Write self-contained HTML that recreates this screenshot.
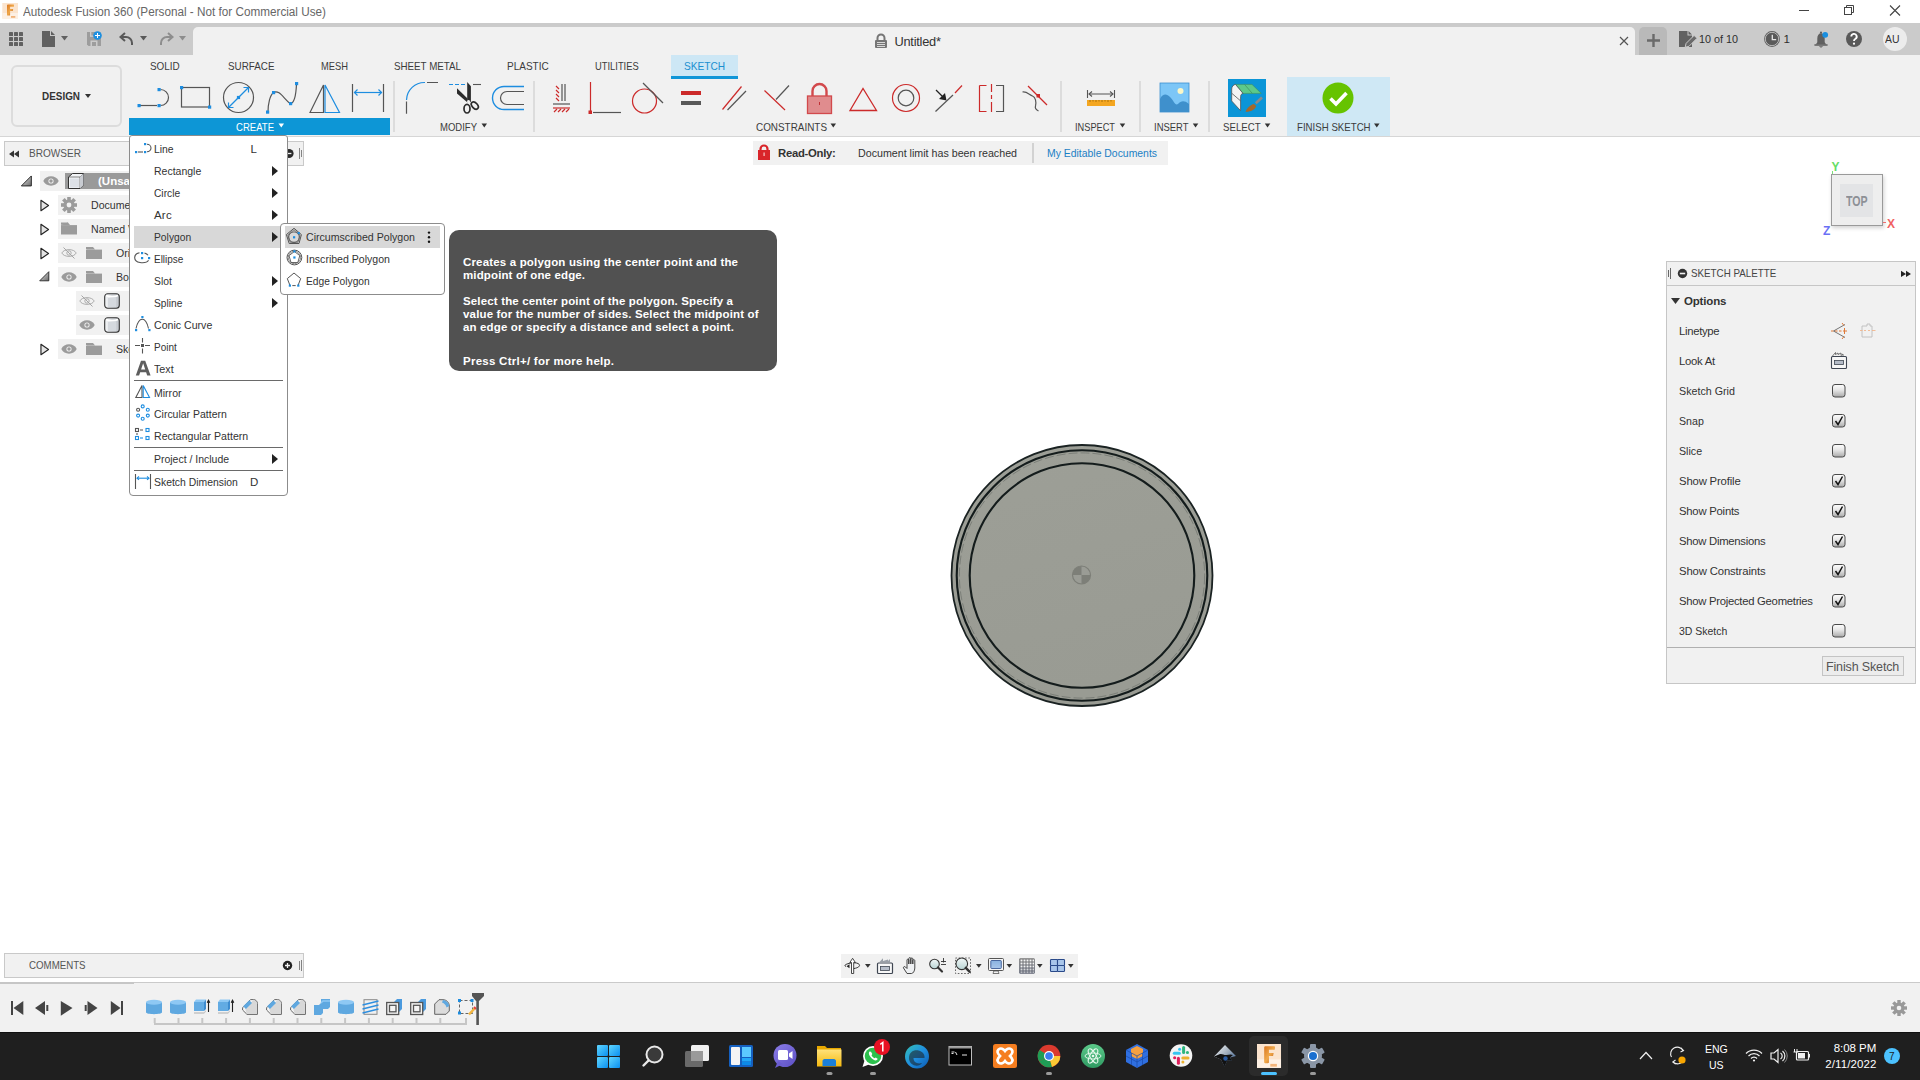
<!DOCTYPE html>
<html><head><meta charset="utf-8">
<style>
*{margin:0;padding:0;box-sizing:border-box}
html,body{width:1920px;height:1080px;overflow:hidden;background:#fff;font-family:"Liberation Sans",sans-serif;color:#333}
.a{position:absolute}
.t{position:absolute;white-space:nowrap;line-height:1}
svg{position:absolute;left:0;top:0;overflow:visible}
</style></head><body>
<!-- TITLE BAR -->
<div class="a" style="left:0;top:0;width:1920px;height:23px;background:#fff"></div>
<!-- TAB BAR -->
<div class="a" style="left:0;top:23px;width:1920px;height:32px;background:#cbcbcb"></div>
<div class="a" style="left:193px;top:27px;width:1442px;height:28px;background:#f1f1f1;border-radius:5px 5px 0 0"></div>
<div class="a" style="left:1639px;top:27px;width:28px;height:28px;background:#b9b9b9;border-radius:5px 5px 0 0"></div>
<div class="a" style="left:1883px;top:27px;width:24px;height:24px;border-radius:50%;background:#ececec"></div>
<!-- TOOLBAR -->
<div class="a" style="left:0;top:55px;width:1920px;height:81px;background:#f1f1f1"></div>
<div class="a" style="left:0;top:136px;width:1920px;height:1px;background:#d6d6d6"></div>
<div class="a" style="left:11px;top:65px;width:111px;height:62px;border:2px solid #dcdcdc;border-radius:6px"></div>
<div class="a" style="left:671px;top:55px;width:67px;height:24px;background:#cde7f5"></div>
<div class="a" style="left:671px;top:76px;width:67px;height:3px;background:#0f96d8"></div>
<div class="a" style="left:129px;top:118px;width:261px;height:17px;background:#0d96d6"></div>
<div class="a" style="left:1287px;top:77px;width:103px;height:59px;background:#cfe8f5"></div>
<div class="a" style="left:393px;top:81px;width:2px;height:51px;background:#dcdcdc"></div>
<div class="a" style="left:533px;top:81px;width:2px;height:51px;background:#dcdcdc"></div>
<div class="a" style="left:1060px;top:81px;width:2px;height:51px;background:#dcdcdc"></div>
<div class="a" style="left:1139px;top:81px;width:2px;height:51px;background:#dcdcdc"></div>
<div class="a" style="left:1208px;top:81px;width:2px;height:51px;background:#dcdcdc"></div>

<!-- BROWSER -->
<div class="a" style="left:4px;top:141px;width:300px;height:25px;background:#f1f1f1;border:1px solid #c9c9c9"></div>
<div class="a" style="left:40px;top:171px;width:100px;height:20px;background:#f1f1f1"></div>
<div class="a" style="left:65px;top:173px;width:80px;height:16px;background:#9a9a9a"></div>
<div class="a" style="left:58px;top:195px;width:80px;height:20px;background:#f1f1f1"></div>
<div class="a" style="left:58px;top:219px;width:80px;height:20px;background:#f1f1f1"></div>
<div class="a" style="left:58px;top:243px;width:80px;height:20px;background:#f1f1f1"></div>
<div class="a" style="left:58px;top:267px;width:80px;height:20px;background:#f1f1f1"></div>
<div class="a" style="left:76px;top:291px;width:60px;height:20px;background:#f1f1f1"></div>
<div class="a" style="left:76px;top:315px;width:60px;height:20px;background:#f1f1f1"></div>
<div class="a" style="left:58px;top:339px;width:80px;height:20px;background:#f1f1f1"></div>

<!-- READ-ONLY BANNER -->
<div class="a" style="left:753px;top:141px;width:415px;height:24px;background:#f1f1f1"></div>
<div class="a" style="left:1032px;top:143px;width:2px;height:20px;background:#d2d2d2"></div>

<!-- VIEWCUBE -->
<div class="a" style="left:1831px;top:174px;width:52px;height:52px;background:#eeeeee;border:1px solid #9a9a9a;box-shadow:1px 2px 4px rgba(0,0,0,0.18)"></div>
<div class="a" style="left:1840px;top:184px;width:33px;height:33px;background:#e3e4e6"></div>

<!-- SKETCH PALETTE -->
<div class="a" style="left:1666px;top:261px;width:250px;height:423px;background:#f1f1f1;border:1px solid #c6c6c6"></div>
<div class="a" style="left:1667px;top:285px;width:248px;height:1px;background:#c6c6c6"></div>
<div class="a" style="left:1667px;top:647px;width:248px;height:1px;background:#b0b0b0"></div>
<div class="a" style="left:1822px;top:656px;width:82px;height:20px;background:#ececec;border:1px solid #c4c4c4"></div>

<!-- COMMENTS -->
<div class="a" style="left:4px;top:953px;width:300px;height:25px;background:#f1f1f1;border:1px solid #c9c9c9"></div>

<!-- NAV BAR -->
<div class="a" style="left:841px;top:954px;width:237px;height:24px;background:#f1f1f1"></div>

<!-- TIMELINE -->
<div class="a" style="left:0;top:982px;width:1920px;height:50px;background:#f1f1f1"></div>
<div class="a" style="left:0;top:982px;width:1920px;height:1px;background:#cacaca"></div>
<div class="a" style="left:0;top:982px;width:134px;height:2px;background:#c6c6c6"></div>

<!-- TASKBAR -->
<div class="a" style="left:0;top:1032px;width:1920px;height:48px;background:#1f1f1f"></div>
<div class="a" style="left:0;top:1032px;width:1920px;height:1px;background:#101010"></div>
<div class="a" style="left:1249px;top:1036px;width:39px;height:40px;background:#2b2b2b;border-radius:5px"></div>
<div class="a" style="left:1261px;top:1072px;width:16px;height:3px;background:#4cc2ff;border-radius:2px"></div>
<div class="a" style="left:1884px;top:1048px;width:16px;height:16px;background:#4cc2ff;border-radius:50%"></div>
<svg width="1920" height="140" viewBox="0 0 1920 140" style="z-index:3">
<!-- F logo -->
<defs><linearGradient id="gF" x1="0" y1="0" x2="1" y2="1"><stop offset="0" stop-color="#d9761f"/><stop offset="0.5" stop-color="#f0a84a"/><stop offset="1" stop-color="#b9560f"/></linearGradient></defs>
<rect x="2.3" y="3" width="15.7" height="15.6" fill="#fbe4ce"/>
<rect x="2.3" y="13" width="15.7" height="5.6" fill="#fdf0e4"/>
<path d="M7 5.2 C7 4.7 7.4 4.4 7.9 4.4 H13.4 C14 4.4 14.2 5 14 5.6 L13.8 6.8 H10.1 V8.9 H13.2 L12.8 10.9 H10.1 V15 C10.1 15.4 9.8 15.6 9.4 15.6 H7.6 C7.2 15.6 7 15.3 7 15Z" fill="url(#gF)"/>
<rect x="11" y="16" width="4.3" height="1.8" fill="#f2b47a"/>
<!-- window controls -->
<rect x="1799" y="10" width="10" height="1" fill="#444"/>
<rect x="1844.5" y="7.5" width="7" height="7" fill="none" stroke="#444" stroke-width="1"/>
<path d="M1846.5 7.5 v-2 h7 v7 h-2" fill="none" stroke="#444" stroke-width="1"/>
<path d="M1890 5.5 l10 10 M1900 5.5 l-10 10" stroke="#444" stroke-width="1.1"/>
<!-- grid -->
<g fill="#616161">
<rect x="9" y="32" width="4" height="4" rx="0.6"/><rect x="14" y="32" width="4" height="4" rx="0.6"/><rect x="19" y="32" width="4" height="4" rx="0.6"/>
<rect x="9" y="37" width="4" height="4" rx="0.6"/><rect x="14" y="37" width="4" height="4" rx="0.6"/><rect x="19" y="37" width="4" height="4" rx="0.6"/>
<rect x="9" y="42" width="4" height="4" rx="0.6"/><rect x="14" y="42" width="4" height="4" rx="0.6"/><rect x="19" y="42" width="4" height="4" rx="0.6"/>
</g>
<!-- file -->
<path d="M42 31 H50 V36 H55 V47 H42Z" fill="#616161"/>
<path d="M51 31 L55 35 H51Z" fill="#616161"/>
<path d="M61 36 h7 l-3.5 4.5z" fill="#616161"/>
<!-- save -->
<path d="M87 32 H100 L101 33 V46 H88.5 L87 44.5Z" fill="#9d9d9d"/>
<rect x="90" y="32" width="5.5" height="4.8" fill="#cbcbcb"/>
<rect x="91.3" y="32" width="4.2" height="3.5" fill="#9d9d9d"/>
<rect x="90.5" y="40.5" width="7" height="5.5" fill="#cbcbcb"/>
<rect x="92" y="42" width="4" height="4" fill="#9d9d9d"/>
<circle cx="97.5" cy="35.5" r="4.3" fill="#1d8fe0"/>
<path d="M97.5 33v5 M95 35.5h5" stroke="#fff" stroke-width="1"/>
<!-- undo -->
<path d="M132 45 v-2 a6 6 0 0 0 -6 -6 h-4" fill="none" stroke="#595959" stroke-width="2"/>
<path d="M125 33 l-4.5 4 l4.5 4" fill="none" stroke="#595959" stroke-width="2"/>
<path d="M140 36 h7 l-3.5 4.5z" fill="#595959"/>
<!-- redo -->
<path d="M161 45 v-2 a6 6 0 0 1 6 -6 h4" fill="none" stroke="#8d8d8d" stroke-width="2"/>
<path d="M168 33 l4.5 4 l-4.5 4" fill="none" stroke="#8d8d8d" stroke-width="2"/>
<path d="M179 36 h7 l-3.5 4.5z" fill="#8d8d8d"/>
<!-- doc lock -->
<path d="M877.5 41 v-3 a3.5 3.5 0 0 1 7 0 v3" fill="none" stroke="#767676" stroke-width="2"/>
<rect x="875" y="40" width="12" height="8" rx="1" fill="#767676"/>
<path d="M877 42.5h8M877 44.5h8M877 46.5h8" stroke="#f1f1f1" stroke-width="0.8"/>
<!-- tab close -->
<path d="M1620 37 l8 8 M1628 37 l-8 8" stroke="#555" stroke-width="1.2"/>
<!-- plus -->
<path d="M1647 40.5 h13 M1653.5 34 v13" stroke="#6a6a6a" stroke-width="2.4"/>
<!-- doc edit -->
<path d="M1679 31 H1687.5 V35.5 H1692 V47 H1679Z" fill="#616161"/>
<path d="M1688.5 31 L1692 34.5 H1688.5Z" fill="#616161"/>
<path d="M1685.2 47.2 l0.9 -3.8 l8 -8 l2.9 2.9 l-8 8z" fill="#6a6a6a" stroke="#cbcbcb" stroke-width="1"/>
<!-- clock -->
<circle cx="1772" cy="39" r="7.9" fill="#5a5a5a"/>
<circle cx="1772" cy="39" r="6.7" fill="none" stroke="#d0d0d0" stroke-width="0.8"/>
<path d="M1772.3 34.8 V39.6 H1776.2" fill="none" stroke="#e6e6e6" stroke-width="1.3"/>
<!-- bell -->
<path d="M1815.8 44.6 L1817.3 42.3 V38.6 C1817.3 35.2 1819 33.2 1821 33.2 C1823 33.2 1824.7 35.2 1824.7 38.6 V42.3 L1826.2 44.6Z" fill="#606060"/>
<rect x="1814.2" y="44.2" width="13.6" height="1.6" rx="0.8" fill="#606060"/>
<circle cx="1821" cy="32.6" r="1.1" fill="#606060"/>
<path d="M1818.8 46.2 H1823.2 L1821 47.8Z" fill="#606060"/>
<circle cx="1825.2" cy="34.8" r="2.9" fill="#1a8fe0"/>
<!-- help -->
<circle cx="1854" cy="39" r="8" fill="#595959"/>
<path d="M1851.3 36.6 a2.7 2.7 0 1 1 3.9 2.4 c-0.9 0.5 -1.2 1 -1.2 2" fill="none" stroke="#fff" stroke-width="1.9"/>
<circle cx="1854" cy="43.7" r="1.1" fill="#fff"/>
</svg>
<svg width="1920" height="140" viewBox="0 0 1920 140" style="z-index:3">
<g fill="none" stroke="#555" stroke-width="1.2">
<!-- line tool -->
<path d="M140 105.5 h17"/>
<path d="M160.5 89.5 a8 8 0 0 1 0 16"/>
<!-- rectangle -->
<rect x="181.5" y="87.5" width="28" height="19.5"/>
<!-- circle -->
<circle cx="238.5" cy="97.5" r="15"/>
<!-- spline -->
<path d="M268 112 C268 104 270 95 273.5 92.5 C279 89 284 99 290 103.5 C294 104 296 96 296.5 84"/>
<!-- mirror left triangle -->
<path d="M310 112.5 L323.5 85 V112.5 Z"/>
<!-- dim -->
<path d="M352.5 84 V112 M383.5 84 V112"/>
<!-- fillet -->
<path d="M406.5 101.5 V113.7 M427 82.5 H438"/>
<!-- offset inner -->
<path d="M524 91.5 H507 A6.5 6.5 0 0 0 507 104.5 H524"/>
</g>
<g fill="#1d8de0">
<rect x="137.5" y="104" width="3.2" height="3.2"/><rect x="157.5" y="104" width="3.2" height="3.2"/><rect x="157.5" y="88" width="3.2" height="3.2"/>
<rect x="180" y="86" width="3.2" height="3.2"/><rect x="208" y="105.5" width="3.2" height="3.2"/>
<rect x="236.9" y="95.9" width="3.2" height="3.2"/>
<rect x="266" y="110.5" width="3.2" height="3.2"/><rect x="272" y="91" width="3.2" height="3.2"/><rect x="289" y="102" width="3.2" height="3.2"/><rect x="295" y="82" width="3.2" height="3.2"/>
</g>
<g fill="none" stroke="#1d8de0" stroke-width="1.2">
<path d="M229 107 L248 88"/>
<path d="M228.5 102.5 V107.5 H233.5 M243.5 87.5 H248.5 V92.5"/>
<path d="M325 85 V112.5 H339.5 Z"/>
<path d="M354 92.5 H382"/>
<path d="M357.5 89.5 L354.5 92.5 L357.5 95.5 M378.5 89.5 L381.5 92.5 L378.5 95.5"/>
<path d="M406.5 100 A18 18 0 0 1 425 82.5"/>
<path d="M492.5 98 A11.5 11.5 0 0 1 504 86.5 H524 M492.5 98 A11.5 11.5 0 0 0 504 109.5 H524" stroke-width="1.4"/>
<path d="M449 84.5 h4 M455 84.5 h4 M461 84.5 h4"/>
</g>
<!-- scissors -->
<path d="M473 84.5 H481" stroke="#555" stroke-width="1.1"/>
<path d="M467.2 82 L470.9 86.2 L470.9 102 L467.2 100.5 Z" fill="#2b2b2b"/>
<path d="M457 88.2 L467.5 98.5 L467.5 102.5 L457 93.6 Z" fill="#2b2b2b"/>
<circle cx="468.6" cy="101.2" r="1.3" fill="#f1f1f1"/>
<ellipse cx="467" cy="108.7" rx="3" ry="4.3" fill="none" stroke="#2b2b2b" stroke-width="1.7"/>
<ellipse cx="474.8" cy="105.6" rx="4.2" ry="2.7" fill="none" stroke="#2b2b2b" stroke-width="1.7" transform="rotate(48 474.8 105.6)"/>
<!-- constraints -->
<g fill="none" stroke="#cc2a2a" stroke-width="1.2">
<path d="M553 108 H570"/>
<path d="M554 112 l3-3 M558 112 l3-3 M562 112 l3-3 M566 112 l3-3"/>
<path d="M556 86 l3 3 M556 90 l3 3 M556 94 l3 3 M556 98 l3 3"/>
<path d="M590.5 82 V111"/>
<circle cx="644.5" cy="101" r="12"/>
<path d="M722.5 109.5 L741.5 86.5"/>
<path d="M764.5 90.5 L785 110"/>
<path d="M850 110.5 L863 88.5 L876.5 110.5 Z" stroke-width="1.3"/>
<circle cx="906" cy="98" r="13.5"/>
<path d="M955 93 L962 85.5"/>
<path d="M979.5 85.5 h7 M979.5 85.5 V111.5 h7"/>
<path d="M991.5 84 v8 M991.5 95 v4 M991.5 102 v10"/>
<path d="M1028 86 L1047 105"/>
</g>
<g fill="none" stroke="#555" stroke-width="1.2">
<path d="M562 84 V101 M565 84 V101"/>
<path d="M553 104 H570"/>
<path d="M593 112.5 H621"/>
<path d="M643 83 L663 103"/>
<path d="M727.5 110 L746 91"/>
<path d="M776 99.5 L789 85.5"/>
<circle cx="906" cy="98" r="7.8"/>
<path d="M935.5 111.5 L953 95"/>
<path d="M996 85.5 h7.5 V111.5 h-7.5"/>
<path d="M1022.5 92 c4 -1 7 3 10 4 c3 1 4 6 3 10 c-1 3 1 4 3 5"/>
</g>
<rect x="588.5" y="110.5" width="3.5" height="3.5" fill="#cc2a2a"/>
<rect x="681" y="91" width="20" height="4" fill="#cc2a2a"/>
<rect x="681" y="101" width="20" height="4" fill="#595959"/>
<path d="M936 90 L944 98" stroke="#222" stroke-width="1.3"/>
<path d="M946.5 100.5 L939 99 L945 93 Z" fill="#222"/>
<rect x="1036.5" y="94" width="3.5" height="3.5" fill="#cc2a2a"/>
<!-- lock -->
<path d="M812.5 96 V91 a7 7 0 0 1 14 0 V96" fill="none" stroke="#d2494c" stroke-width="2.4"/>
<rect x="807.5" y="96" width="24" height="17.5" fill="#e08c8e" stroke="#d2494c" stroke-width="1.3"/>
<path d="M819.5 102 v3" stroke="#c03035" stroke-width="1"/>
<!-- measure -->
<path d="M1087.5 90 V98 M1114.5 90 V98 M1089 94 H1113" stroke="#555" stroke-width="1.1" fill="none"/>
<path d="M1092 91.5 L1089 94 L1092 96.5 M1110 91.5 L1113 94 L1110 96.5" stroke="#555" stroke-width="1.1" fill="none"/>
<rect x="1087" y="100" width="28" height="6" fill="#f4a620"/>
<path d="M1090 100v2 M1093 100v1.5 M1096 100v2 M1099 100v1.5 M1102 100v2 M1105 100v1.5 M1108 100v2 M1111 100v1.5" stroke="#8a5a00" stroke-width="0.7"/>
<!-- insert image -->
<rect x="1160" y="83" width="29" height="29" fill="#7cc6f7"/>
<rect x="1160" y="83" width="29" height="29" fill="none" stroke="#3c8fd0" stroke-width="0.8"/>
<path d="M1160 112 V99 C1163 93 1167 94 1170 97 C1174 101 1175 106 1178 104 C1181 101 1184 100 1189 104 V112Z" fill="#3f90cc"/>
<circle cx="1180.5" cy="91" r="3" fill="#fbf7c8"/>
<!-- select -->
<rect x="1228" y="79" width="38" height="38" fill="#0b95d7"/>
<path d="M1235.5 84.4 H1252 L1261.3 93.4 H1243 Z" fill="#5cc98a" stroke="#3e8e60" stroke-width="0.6"/>
<path d="M1244.5 84.4 L1252.3 93.4" stroke="#3e8e60" stroke-width="0.7"/>
<path d="M1235.5 84.4 C1233.5 84.6 1231.8 86.5 1231.7 89 V101 L1240.6 110.7 V96.5 C1240.6 95 1241.5 93.6 1243 93.4 Z" fill="#f4f4f4" stroke="#555" stroke-width="0.8" stroke-linejoin="round"/>
<path d="M1231.8 93.3 L1240.5 100.8" stroke="#555" stroke-width="0.8"/>
<path d="M1255.8 103.2 L1262 97.5" stroke="#8a8a8a" stroke-width="2.6"/>
<path d="M1245.5 111.7 C1247 108 1250.5 104.5 1254 104 L1256.2 106 C1255 110 1250 112 1245.5 111.7Z" fill="#a5682a"/>
<!-- finish check -->
<circle cx="1338" cy="98" r="15.5" fill="#66c300"/>
<path d="M1330.5 98.5 L1336 104 L1346.5 93" fill="none" stroke="#fff" stroke-width="3.6"/>
<!-- dropdown triangles -->
<g fill="#333">
<path d="M85 94 h6 l-3 4z"/>
<path d="M481.5 123.5 h5.5 l-2.75 4z"/>
<path d="M830.5 123.5 h5.5 l-2.75 4z"/>
<path d="M1119.7 123.5 h5.5 l-2.75 4z"/>
<path d="M1192.8 123.5 h5.5 l-2.75 4z"/>
<path d="M1264.8 123.5 h5.5 l-2.75 4z"/>
<path d="M1374 123.5 h5.5 l-2.75 4z"/>
</g>
<path d="M278.5 123.5 h5.5 l-2.75 4z" fill="#fff"/>
</svg>
<svg width="1920" height="1080" viewBox="0 0 1920 1080" style="z-index:3">
<defs>
<linearGradient id="gtri" x1="0" y1="0" x2="1" y2="1"><stop offset="0" stop-color="#f0f0f0"/><stop offset="1" stop-color="#666"/></linearGradient>
<linearGradient id="gcb" x1="0" y1="0" x2="0" y2="1"><stop offset="0" stop-color="#fdfdfd"/><stop offset="0.45" stop-color="#e6e6e6"/><stop offset="1" stop-color="#a9a9a9"/></linearGradient>
<linearGradient id="gcyl" x1="0" y1="0" x2="1" y2="0"><stop offset="0" stop-color="#f4f6f8"/><stop offset="1" stop-color="#c0c4ca"/></linearGradient>






</defs>
<!-- browser header icons -->
<path d="M9 154 l5 -3.5 v7z M14 154 l5 -3.5 v7z" fill="#333"/>
<circle cx="289" cy="153.5" r="4.6" fill="#2a2a2a"/>
<path d="M286.6 153.5 h4.8" stroke="#f1f1f1" stroke-width="1.3"/>
<path d="M299.5 148 v11 M301.5 150 v7" stroke="#777" stroke-width="0.9"/>
<!-- row1 -->
<svg viewBox="0 0 12 12" x="20.6" y="175.2" width="11.5" height="11.5" style="position:static;overflow:visible"><path d="M0.8 11.2 L11.2 0.8 V11.2 Z" fill="url(#gtri)" stroke="#222" stroke-width="1" stroke-linejoin="round"/></svg>
<svg viewBox="0 0 16 10" x="43" y="176" width="16" height="10" style="position:static;overflow:visible"><path d="M0.3 5 C3 -1.2 13 -1.2 15.7 5 C13 11.2 3 11.2 0.3 5Z" fill="#9b9b9b"/><circle cx="8" cy="5" r="2.6" fill="#f1f1f1"/><circle cx="8" cy="5" r="1.7" fill="#9b9b9b"/></svg>
<path d="M68.5 177 L72.5 173.5 H83.5 V185 L80 188.5 H68.5 Z" fill="#f2f4f6" stroke="#333" stroke-width="1"/>
<path d="M68.5 177 H80 L83.5 173.5 M80 177 V188.5" fill="none" stroke="#333" stroke-width="0.6"/>
<path d="M80 177 L83.5 173.5 V185 L80 188.5Z" fill="#c9ccd2"/>
<rect x="70" y="178.5" width="9" height="9" fill="#dde1e7"/>
<!-- row2 -->
<svg viewBox="0 0 10 13" x="40" y="199" width="9.5" height="13" style="position:static;overflow:visible"><path d="M1 1 L9 6.5 L1 12 Z" fill="#e4e4e4" stroke="#222" stroke-width="1.2" stroke-linejoin="round"/></svg>
<g transform="translate(69 205)" fill="#9b9b9b">
<circle r="5.6"/>
<g id="teeth"><rect x="-1.8" y="-8" width="3.6" height="3.5"/><rect x="-1.8" y="4.5" width="3.6" height="3.5"/><rect x="-8" y="-1.8" width="3.5" height="3.6"/><rect x="4.5" y="-1.8" width="3.5" height="3.6"/></g>
<g transform="rotate(45)"><rect x="-1.8" y="-8" width="3.6" height="3.5"/><rect x="-1.8" y="4.5" width="3.6" height="3.5"/><rect x="-8" y="-1.8" width="3.5" height="3.6"/><rect x="4.5" y="-1.8" width="3.5" height="3.6"/></g>
<circle r="2.4" fill="#f1f1f1"/>
</g>
<!-- row3 named views -->
<svg viewBox="0 0 10 13" x="40" y="223" width="9.5" height="13" style="position:static;overflow:visible"><path d="M1 1 L9 6.5 L1 12 Z" fill="#e4e4e4" stroke="#222" stroke-width="1.2" stroke-linejoin="round"/></svg>
<svg viewBox="0 0 16 12" x="61" y="222.5" width="16" height="12" style="position:static;overflow:visible"><path d="M0 2 h6 l1 -1.5 h0 v0 H0z" fill="#9b9b9b"/><rect x="0" y="0" width="7" height="2" fill="#9b9b9b"/><rect x="0" y="2.6" width="16" height="9.4" fill="#9b9b9b"/><path d="M7 0 L9 2.6 H0" fill="#9b9b9b"/></svg>
<!-- row4 origin -->
<svg viewBox="0 0 10 13" x="40" y="247" width="9.5" height="13" style="position:static;overflow:visible"><path d="M1 1 L9 6.5 L1 12 Z" fill="#e4e4e4" stroke="#222" stroke-width="1.2" stroke-linejoin="round"/></svg>
<svg viewBox="0 0 16 12" x="61" y="247" width="16" height="12" style="position:static;overflow:visible"><path d="M0.8 6 C3 1.5 13 1.5 15.2 6 C13 10.5 3 10.5 0.8 6Z" fill="none" stroke="#a5a5a5" stroke-width="0.9"/><circle cx="8" cy="6" r="2.2" fill="none" stroke="#a5a5a5" stroke-width="0.9"/><path d="M2.5 0.5 L13.5 11.5" stroke="#a5a5a5" stroke-width="1"/></svg>
<svg viewBox="0 0 16 12" x="86" y="247" width="16" height="12" style="position:static;overflow:visible"><path d="M0 2 h6 l1 -1.5 h0 v0 H0z" fill="#9b9b9b"/><rect x="0" y="0" width="7" height="2" fill="#9b9b9b"/><rect x="0" y="2.6" width="16" height="9.4" fill="#9b9b9b"/><path d="M7 0 L9 2.6 H0" fill="#9b9b9b"/></svg>
<!-- row5 bodies -->
<svg viewBox="0 0 12 12" x="39" y="271" width="10.5" height="10.5" style="position:static;overflow:visible"><path d="M0.8 11.2 L11.2 0.8 V11.2 Z" fill="url(#gtri)" stroke="#222" stroke-width="1" stroke-linejoin="round"/></svg>
<svg viewBox="0 0 16 10" x="61" y="272" width="16" height="10" style="position:static;overflow:visible"><path d="M0.3 5 C3 -1.2 13 -1.2 15.7 5 C13 11.2 3 11.2 0.3 5Z" fill="#9b9b9b"/><circle cx="8" cy="5" r="2.6" fill="#f1f1f1"/><circle cx="8" cy="5" r="1.7" fill="#9b9b9b"/></svg>
<svg viewBox="0 0 16 12" x="86" y="271" width="16" height="12" style="position:static;overflow:visible"><path d="M0 2 h6 l1 -1.5 h0 v0 H0z" fill="#9b9b9b"/><rect x="0" y="0" width="7" height="2" fill="#9b9b9b"/><rect x="0" y="2.6" width="16" height="9.4" fill="#9b9b9b"/><path d="M7 0 L9 2.6 H0" fill="#9b9b9b"/></svg>
<!-- row6/7 bodies -->
<svg viewBox="0 0 16 12" x="79" y="295" width="16" height="12" style="position:static;overflow:visible"><path d="M0.8 6 C3 1.5 13 1.5 15.2 6 C13 10.5 3 10.5 0.8 6Z" fill="none" stroke="#a5a5a5" stroke-width="0.9"/><circle cx="8" cy="6" r="2.2" fill="none" stroke="#a5a5a5" stroke-width="0.9"/><path d="M2.5 0.5 L13.5 11.5" stroke="#a5a5a5" stroke-width="1"/></svg>
<svg viewBox="0 0 16 16" x="104" y="293" width="16" height="16" style="position:static;overflow:visible"><rect x="0.7" y="0.7" width="14.6" height="14.6" rx="3" fill="url(#gcyl)" stroke="#333" stroke-width="1.1"/><path d="M2 2.5 C5 4 11 4 14 2.5" fill="none" stroke="#fff" stroke-width="1.4"/><rect x="4" y="5" width="8" height="9" fill="#d5d9de"/></svg>
<svg viewBox="0 0 16 10" x="79" y="320" width="16" height="10" style="position:static;overflow:visible"><path d="M0.3 5 C3 -1.2 13 -1.2 15.7 5 C13 11.2 3 11.2 0.3 5Z" fill="#9b9b9b"/><circle cx="8" cy="5" r="2.6" fill="#f1f1f1"/><circle cx="8" cy="5" r="1.7" fill="#9b9b9b"/></svg>
<svg viewBox="0 0 16 16" x="104" y="317" width="16" height="16" style="position:static;overflow:visible"><rect x="0.7" y="0.7" width="14.6" height="14.6" rx="3" fill="url(#gcyl)" stroke="#333" stroke-width="1.1"/><path d="M2 2.5 C5 4 11 4 14 2.5" fill="none" stroke="#fff" stroke-width="1.4"/><rect x="4" y="5" width="8" height="9" fill="#d5d9de"/></svg>
<!-- row8 sketches -->
<svg viewBox="0 0 10 13" x="40" y="343" width="9.5" height="13" style="position:static;overflow:visible"><path d="M1 1 L9 6.5 L1 12 Z" fill="#e4e4e4" stroke="#222" stroke-width="1.2" stroke-linejoin="round"/></svg>
<svg viewBox="0 0 16 10" x="61" y="344" width="16" height="10" style="position:static;overflow:visible"><path d="M0.3 5 C3 -1.2 13 -1.2 15.7 5 C13 11.2 3 11.2 0.3 5Z" fill="#9b9b9b"/><circle cx="8" cy="5" r="2.6" fill="#f1f1f1"/><circle cx="8" cy="5" r="1.7" fill="#9b9b9b"/></svg>
<svg viewBox="0 0 16 12" x="86" y="343" width="16" height="12" style="position:static;overflow:visible"><path d="M0 2 h6 l1 -1.5 h0 v0 H0z" fill="#9b9b9b"/><rect x="0" y="0" width="7" height="2" fill="#9b9b9b"/><rect x="0" y="2.6" width="16" height="9.4" fill="#9b9b9b"/><path d="M7 0 L9 2.6 H0" fill="#9b9b9b"/></svg>

<!-- banner lock -->
<path d="M760.5 150.5 v-1.5 a3.5 3.5 0 0 1 7 0 v1.5" fill="none" stroke="#d9252a" stroke-width="2.2"/>
<rect x="758" y="150" width="12" height="10" fill="#d9252a"/>
<rect x="763.4" y="152.5" width="1.4" height="3.5" fill="#f0b0b0"/>

<!-- viewcube axes -->
<path d="M1832.5 174 v-3" stroke="#7be07b" stroke-width="1"/>
<path d="M1883 222.5 h3" stroke="#f07070" stroke-width="1"/>

<!-- palette icons -->
<path d="M1668.5 270 v7 M1670.5 268 v11" stroke="#444" stroke-width="0.8"/>
<circle cx="1682.5" cy="273.5" r="4.7" fill="#333"/>
<rect x="1679.8" y="272.7" width="5.4" height="1.6" fill="#f1f1f1"/>
<path d="M1901 270.8 l5 3.1 l-5 3.1z M1906 270.8 l5 3.1 l-5 3.1z" fill="#222"/>
<path d="M1671 298 h9 l-4.5 6z" fill="#333"/>
<!-- linetype -->
<path d="M1833.5 331 L1845 324.5 M1833.5 331 L1845 337.5" stroke="#666" stroke-width="0.9"/>
<path d="M1831 331 h2.5 M1835 331 h2.5 M1839 331 h2.5 M1843 331 h4 M1844.5 328 v6 M1842 323 l2 2.5 M1842 339 l2 -2.5" stroke="#e07b39" stroke-width="1"/>
<path d="M1862 326 h5 v-2 h3 v2 h2 v11 h-10z" fill="none" stroke="#bdbdbd" stroke-width="0.9" stroke-linejoin="round"/>
<path d="M1860 330.5 h2.5 M1864 330.5 h2 M1868 330.5 h2 M1872 330.5 h3.5" stroke="#f0b58c" stroke-width="0.9"/>
<!-- look at -->
<rect x="1831.5" y="356.5" width="15" height="12" rx="1" fill="#f7f7f7" stroke="#3f4652" stroke-width="1.1"/>
<rect x="1834.5" y="360.5" width="9" height="4" fill="#b5bcc8" stroke="#3f4652" stroke-width="0.8"/>
<path d="M1832.5 356 l3 -3.5 v2 l2.5 -1.5 v1.5 l3 -1.5 v2.5 l2 -1.5 v2" fill="none" stroke="#555" stroke-width="0.8"/>
<!-- checkboxes -->
<g stroke="#4a4a4a" stroke-width="1" fill="url(#gcb)">
<rect x="1832.5" y="384.5" width="12.5" height="12.5" rx="2.5"/>
<rect x="1832.5" y="414.5" width="12.5" height="12.5" rx="2.5"/>
<rect x="1832.5" y="444.5" width="12.5" height="12.5" rx="2.5"/>
<rect x="1832.5" y="474.5" width="12.5" height="12.5" rx="2.5"/>
<rect x="1832.5" y="504.5" width="12.5" height="12.5" rx="2.5"/>
<rect x="1832.5" y="534.5" width="12.5" height="12.5" rx="2.5"/>
<rect x="1832.5" y="564.5" width="12.5" height="12.5" rx="2.5"/>
<rect x="1832.5" y="594.5" width="12.5" height="12.5" rx="2.5"/>
<rect x="1832.5" y="624.5" width="12.5" height="12.5" rx="2.5"/>
</g>
<g fill="none" stroke="#111" stroke-width="1.5">
<path d="M1835.5 421 l2.5 3.5 l4.5 -8"/>
<path d="M1835.5 481 l2.5 3.5 l4.5 -8"/>
<path d="M1835.5 511 l2.5 3.5 l4.5 -8"/>
<path d="M1835.5 541 l2.5 3.5 l4.5 -8"/>
<path d="M1835.5 571 l2.5 3.5 l4.5 -8"/>
<path d="M1835.5 601 l2.5 3.5 l4.5 -8"/>
</g>

<!-- sketch circle -->
<defs><linearGradient id="gdisk" x1="0" y1="0" x2="0.3" y2="1"><stop offset="0" stop-color="#9d9f97"/><stop offset="1" stop-color="#999b93"/></linearGradient></defs>
<circle cx="1082" cy="575.5" r="130.5" fill="url(#gdisk)" stroke="#1a2222" stroke-width="1.8"/>
<circle cx="1082" cy="575.5" r="125.3" fill="none" stroke="#141c1c" stroke-width="2.1"/>
<circle cx="1082" cy="575.5" r="122.6" fill="none" stroke="#6d716c" stroke-width="0.7" stroke-dasharray="9 3"/>
<circle cx="1082" cy="575.5" r="112.3" fill="none" stroke="#141c1c" stroke-width="2.1"/>
<circle cx="1081.5" cy="575" r="9" fill="#7d7f78"/>
<path d="M1081.5 566 v9 h9 a9 9 0 0 0 -9 -9z M1081.5 584 v-9 h-9 a9 9 0 0 0 9 9z" fill="#9a9c95"/>
<circle cx="1081.5" cy="575" r="9" fill="none" stroke="#7d7f78" stroke-width="1.2"/>

<!-- comments -->
<circle cx="287.5" cy="965.5" r="4.7" fill="#222"/>
<path d="M285 965.5 h5 M287.5 963 v5" stroke="#f1f1f1" stroke-width="1.3"/>
<path d="M299.5 961 v9 M301.5 960 v11" stroke="#666" stroke-width="0.8"/>
</svg>
<svg width="1920" height="1080" viewBox="0 0 1920 1080" style="z-index:3">
<defs>
<linearGradient id="glens" x1="0" y1="0" x2="0" y2="1"><stop offset="0" stop-color="#f2f8f8"/><stop offset="1" stop-color="#b9d4d4"/></linearGradient>
<linearGradient id="ggrid" x1="0" y1="0" x2="0" y2="1"><stop offset="0" stop-color="#777"/><stop offset="1" stop-color="#5a6070"/></linearGradient>
<linearGradient id="gblue" x1="0" y1="0" x2="0" y2="1"><stop offset="0" stop-color="#8ab2e0"/><stop offset="1" stop-color="#a9c6ea"/></linearGradient>
</defs>
<!-- orbit -->
<path d="M846 966.5 C842 965 850 962.5 855 962.8 C861 963.2 862 967.8 852 968.8" fill="none" stroke="#333" stroke-width="1"/>
<path d="M846.5 966.2 L849.5 964.2 V968.2Z" fill="#222"/>
<path d="M851.5 973.5 V962.5 H849.8 L852.6 958.3 L855.4 962.5 H853.7 V973.5Z" fill="#fff" stroke="#333" stroke-width="0.9"/>
<path d="M865 964 h5.6 l-2.8 3.8z" fill="#333"/>
<!-- look at -->
<rect x="877.5" y="963" width="15" height="10.5" rx="1" fill="#f8f8f8" stroke="#3f4652" stroke-width="1.2"/>
<rect x="880.5" y="966.5" width="9" height="4" fill="#b6bdc9" stroke="#3f4652" stroke-width="0.8"/>
<path d="M879 962.5 L883 958.3 V961 L888 959.5 V961 L890 959 V962.5Z" fill="#9aa0a8"/>
<!-- hand -->
<path d="M907 973.5 L903.5 968 C903 966.8 904.5 966 905.5 967 L907 968.5 V960 C907 958.8 908.8 958.8 908.8 960 V964 V958.5 C908.8 957.3 910.8 957.3 910.8 958.5 V964 V958.8 C910.8 957.7 912.8 957.7 912.8 958.8 V964 V960.5 C912.8 959.4 914.8 959.4 914.8 960.5 V968 C914.8 971 913 973.5 911.5 973.5Z" fill="#eef0f2" stroke="#333" stroke-width="0.9" stroke-linejoin="round"/>
<!-- zoom -->
<circle cx="934.5" cy="964" r="4.8" fill="url(#glens)" stroke="#333" stroke-width="1.1"/>
<path d="M938 967.5 L942 971.5" stroke="#333" stroke-width="2.2" stroke-linecap="round"/>
<path d="M941 961.5 h5 M943.5 958 v4.5 M941 964.5 h5" stroke="#333" stroke-width="0.9"/>
<!-- zoom window -->
<rect x="955.5" y="958" width="15" height="15.5" fill="none" stroke="#444" stroke-width="0.8" stroke-dasharray="1.6 1.6"/>
<circle cx="961.8" cy="963.8" r="5.8" fill="url(#glens)" stroke="#333" stroke-width="1.1"/>
<path d="M965.8 967.8 L969.5 971.7" stroke="#333" stroke-width="2.4" stroke-linecap="round"/>
<path d="M976 964 h5.6 l-2.8 3.8z" fill="#333"/>
<!-- display -->
<rect x="988.5" y="958.5" width="15" height="12" rx="1" fill="#f5f5f5" stroke="#444" stroke-width="0.9"/>
<rect x="990.8" y="960.5" width="10.5" height="8" rx="0.8" fill="url(#gblue)" stroke="#2a4a8a" stroke-width="0.8"/>
<path d="M993 973.5 L993.8 971 H998.2 L999 973.5Z" fill="#f0f0f0" stroke="#444" stroke-width="0.7"/>
<path d="M1006.5 964 h5.6 l-2.8 3.8z" fill="#333"/>
<!-- grid -->
<rect x="1019.2" y="958.2" width="15.6" height="15.6" rx="1.2" fill="url(#ggrid)"/>
<g fill="#f4f4f4">
<rect x="1020.5" y="959.5" width="2" height="2"/><rect x="1023.5" y="959.5" width="2" height="2"/><rect x="1026.5" y="959.5" width="2" height="2"/><rect x="1029.5" y="959.5" width="2" height="2"/><rect x="1032.5" y="959.5" width="1.5" height="2"/>
<rect x="1020.5" y="962.5" width="2" height="2"/><rect x="1023.5" y="962.5" width="2" height="2"/><rect x="1026.5" y="962.5" width="2" height="2"/><rect x="1029.5" y="962.5" width="2" height="2"/><rect x="1032.5" y="962.5" width="1.5" height="2"/>
<rect x="1020.5" y="965.5" width="2" height="2"/><rect x="1023.5" y="965.5" width="2" height="2"/><rect x="1026.5" y="965.5" width="2" height="2"/><rect x="1029.5" y="965.5" width="2" height="2"/><rect x="1032.5" y="965.5" width="1.5" height="2"/>
<rect x="1020.5" y="968.5" width="2" height="2" opacity="0.8"/><rect x="1023.5" y="968.5" width="2" height="2" opacity="0.8"/><rect x="1026.5" y="968.5" width="2" height="2" opacity="0.8"/><rect x="1029.5" y="968.5" width="2" height="2" opacity="0.8"/><rect x="1032.5" y="968.5" width="1.5" height="2" opacity="0.8"/>
<rect x="1020.5" y="971.3" width="2" height="1.8" opacity="0.6"/><rect x="1023.5" y="971.3" width="2" height="1.8" opacity="0.6"/><rect x="1026.5" y="971.3" width="2" height="1.8" opacity="0.6"/><rect x="1029.5" y="971.3" width="2" height="1.8" opacity="0.6"/><rect x="1032.5" y="971.3" width="1.5" height="1.8" opacity="0.6"/>
</g>
<path d="M1037 964 h5.6 l-2.8 3.8z" fill="#333"/>
<!-- viewports -->
<g fill="#a9c6ea" stroke="#2a4a8a" stroke-width="1.1">
<rect x="1050.5" y="959.5" width="7" height="6" rx="0.8"/><rect x="1057.5" y="959.5" width="7" height="6" rx="0.8"/>
<rect x="1050.5" y="965.5" width="7" height="6" rx="0.8"/><rect x="1057.5" y="965.5" width="7" height="6" rx="0.8"/>
</g>
<path d="M1068 964 h5.6 l-2.8 3.8z" fill="#333"/>

<!-- timeline playback -->
<g fill="#444">
<rect x="11" y="1001" width="2" height="14"/><path d="M23.3 1001 V1015 L13.5 1008Z"/>
<path d="M35 1008 L45 1001 V1015Z"/><rect x="46.3" y="1005" width="2" height="6"/>
<path d="M60.8 1001 L72.5 1008 L60.8 1015.8Z"/>
<rect x="84.7" y="1005" width="2" height="6"/><path d="M87.5 1001 L97.5 1008 L87.5 1015Z"/>
<path d="M110.8 1001 L120.5 1008 L110.8 1015Z"/><rect x="121" y="1001" width="2" height="14"/>
</g>
<!-- ruler -->
<path d="M154 1024 H467" stroke="#c6c6c6" stroke-width="2"/>
<g stroke="#c6c6c6" stroke-width="2">
<path d="M154.7 1018 v5 M178.5 1018 v5 M202.3 1018 v5 M226.1 1018 v5 M249.9 1018 v5 M273.7 1018 v5 M297.5 1018 v5 M321.3 1018 v5 M345.1 1018 v5 M368.9 1018 v5 M392.7 1018 v5 M416.5 1018 v5 M440.3 1018 v5 M466 1018 v5"/>
</g>
<!-- timeline icons -->
<defs>








</defs>
<svg viewBox="0 0 16 16" x="146" y="999" width="16" height="16.5" style="position:static;overflow:visible"><path d="M0 3 V13 C0 15.5 16 15.5 16 13 V3Z" fill="#5fa8e0"/><ellipse cx="8" cy="3" rx="8" ry="2.6" fill="#8ec8f4"/></svg>
<svg viewBox="0 0 16 16" x="170" y="999" width="16" height="16.5" style="position:static;overflow:visible"><path d="M0 3 V13 C0 15.5 16 15.5 16 13 V3Z" fill="#5fa8e0"/><ellipse cx="8" cy="3" rx="8" ry="2.6" fill="#8ec8f4"/></svg>
<svg viewBox="0 0 16 16" x="193.5" y="999" width="16" height="16" style="position:static;overflow:visible"><path d="M0.5 13.3 H10.5 L12.5 11.3 V12.5 L10.5 14.8 H0.5Z" fill="#c4c4c4"/><rect x="0.5" y="3" width="10" height="9" fill="#62abe3"/><path d="M0.5 3 L2.5 0.5 H12.5 L10.5 3Z" fill="#8ec8f4"/><path d="M10.5 3 L12.5 0.5 V10 L10.5 12Z" fill="#3d8cd0"/><path d="M15 13 V1.8 M13.7 3.8 L15 1.2 L16.3 3.8" stroke="#222" stroke-width="1.1" fill="none"/></svg>
<svg viewBox="0 0 16 16" x="217.5" y="999" width="16" height="16" style="position:static;overflow:visible"><path d="M0.5 13.3 H10.5 L12.5 11.3 V12.5 L10.5 14.8 H0.5Z" fill="#c4c4c4"/><rect x="0.5" y="3" width="10" height="9" fill="#62abe3"/><path d="M0.5 3 L2.5 0.5 H12.5 L10.5 3Z" fill="#8ec8f4"/><path d="M10.5 3 L12.5 0.5 V10 L10.5 12Z" fill="#3d8cd0"/><path d="M15 13 V1.8 M13.7 3.8 L15 1.2 L16.3 3.8" stroke="#222" stroke-width="1.1" fill="none"/></svg>
<svg viewBox="0 0 16 16" x="242" y="999" width="16" height="16" style="position:static;overflow:visible"><path d="M0.6 11 V8.8 L8.5 0.6 H11.5 C13.7 0.6 15.4 2.3 15.4 4.5 V15.4 H5Z" fill="#f6f6f6" stroke="#555" stroke-width="0.9" stroke-linejoin="round"/><path d="M4.8 14.9 H14.9 V4.5 C14.9 2.6 13.4 1.1 11.5 1.1 L4 8.6 C3 9.6 3.5 12 4.8 14.9Z" fill="#d8d8d8"/><path d="M1.2 7.3 L7.3 1.2 L10 3.9 L3.9 10Z" fill="#5fa8e0"/></svg>
<svg viewBox="0 0 16 16" x="266" y="999" width="16" height="16" style="position:static;overflow:visible"><path d="M0.6 11 V8.8 L8.5 0.6 H11.5 C13.7 0.6 15.4 2.3 15.4 4.5 V15.4 H5Z" fill="#f6f6f6" stroke="#555" stroke-width="0.9" stroke-linejoin="round"/><path d="M4.8 14.9 H14.9 V4.5 C14.9 2.6 13.4 1.1 11.5 1.1 L4 8.6 C3 9.6 3.5 12 4.8 14.9Z" fill="#d8d8d8"/><path d="M1.2 7.3 L7.3 1.2 L10 3.9 L3.9 10Z" fill="#5fa8e0"/></svg>
<svg viewBox="0 0 16 16" x="290" y="999" width="16" height="16" style="position:static;overflow:visible"><path d="M0.6 11 V8.8 L8.5 0.6 H11.5 C13.7 0.6 15.4 2.3 15.4 4.5 V15.4 H5Z" fill="#f6f6f6" stroke="#555" stroke-width="0.9" stroke-linejoin="round"/><path d="M4.8 14.9 H14.9 V4.5 C14.9 2.6 13.4 1.1 11.5 1.1 L4 8.6 C3 9.6 3.5 12 4.8 14.9Z" fill="#d8d8d8"/><path d="M1.2 7.3 L7.3 1.2 L10 3.9 L3.9 10Z" fill="#5fa8e0"/></svg>
<svg viewBox="0 0 16 16" x="314" y="999" width="16" height="16" style="position:static;overflow:visible"><path d="M0 6 H5 L7 4 V0 L9 -0 H16 V8 L14 10 H9 V14 L7 16 H0Z" fill="#5fa8e0"/><path d="M7 4 L9 2 H16" fill="none" stroke="#8ec8f4" stroke-width="1.5"/></svg>
<svg viewBox="0 0 16 16" x="338" y="999" width="16" height="16.5" style="position:static;overflow:visible"><path d="M0 3 V13 C0 15.5 16 15.5 16 13 V3Z" fill="#5fa8e0"/><ellipse cx="8" cy="3" rx="8" ry="2.6" fill="#8ec8f4"/></svg>
<svg viewBox="0 0 16 16" x="362.5" y="999" width="16" height="16" style="position:static;overflow:visible"><rect x="1.5" y="0.7" width="13" height="14.6" fill="#f0f0f0" stroke="#888" stroke-width="1"/><path d="M0 6 L16 2 M0 10 L16 6 M0 14 L16 10" stroke="#2e8fe0" stroke-width="1.3"/></svg>
<svg viewBox="0 0 16 16" x="386" y="999" width="16" height="16" style="position:static;overflow:visible"><path d="M8 3 L11 0 H16 V10 L13 13" fill="#4a9ade"/><rect x="0.7" y="3.5" width="12" height="12" fill="#f4f4f4" stroke="#555" stroke-width="1.3"/><rect x="3.5" y="6.3" width="6.5" height="6.5" fill="#f4f4f4" stroke="#555" stroke-width="1.3"/></svg>
<svg viewBox="0 0 16 16" x="410" y="999" width="16" height="16" style="position:static;overflow:visible"><path d="M8 3 L11 0 H16 V10 L13 13" fill="#4a9ade"/><rect x="0.7" y="3.5" width="12" height="12" fill="#f4f4f4" stroke="#555" stroke-width="1.3"/><rect x="3.5" y="6.3" width="6.5" height="6.5" fill="#f4f4f4" stroke="#555" stroke-width="1.3"/></svg>
<svg viewBox="0 0 16 16" x="434" y="999" width="16" height="16" style="position:static;overflow:visible"><path d="M0.7 15.3 V5 L5 0.7 H9 C12.5 0.7 15.3 3.5 15.3 7 V12 L12 15.3Z" fill="#dcdcdc" stroke="#555" stroke-width="0.9"/><path d="M9 1 C12 1.2 14.8 3.8 15.3 7 L12.5 8.5 C12 6 10.5 4.5 8 3.5Z" fill="#5fa8e0"/></svg>
<svg viewBox="0 0 18 16" x="458" y="999" width="18" height="16" style="position:static;overflow:visible"><rect x="1.5" y="1.5" width="13" height="13" fill="none" stroke="#555" stroke-width="0.9" stroke-dasharray="3 2"/><rect x="0" y="0" width="3" height="3" fill="#1d8de0"/><rect x="12.5" y="0" width="3" height="3" fill="#1d8de0"/><rect x="0" y="12.5" width="3" height="3" fill="#1d8de0"/><path d="M11 15.5 L17 9" stroke="#f4b63f" stroke-width="2.5"/><path d="M16 8 L18 10" stroke="#e84040" stroke-width="2"/></svg>
<!-- playhead -->
<path d="M472 993 H484 V996 L479 1001 H476 L472 996Z" fill="#555"/>
<rect x="476.3" y="1000" width="2.6" height="25" fill="#555"/>
<!-- settings gear -->
<g transform="translate(1899 1008)" fill="#999">
<circle r="5.5"/>
<rect x="-1.7" y="-8" width="3.4" height="3.5"/><rect x="-1.7" y="4.5" width="3.4" height="3.5"/><rect x="-8" y="-1.7" width="3.5" height="3.4"/><rect x="4.5" y="-1.7" width="3.5" height="3.4"/>
<g transform="rotate(45)"><rect x="-1.7" y="-8" width="3.4" height="3.5"/><rect x="-1.7" y="4.5" width="3.4" height="3.5"/><rect x="-8" y="-1.7" width="3.5" height="3.4"/><rect x="4.5" y="-1.7" width="3.5" height="3.4"/></g>
<circle r="2.3" fill="#f1f1f1"/>
</g>
</svg>
<svg width="1920" height="1080" viewBox="0 0 1920 1080" style="z-index:3">
<defs>
<linearGradient id="gwin" x1="0" y1="0" x2="1" y2="1"><stop offset="0" stop-color="#5fd6ff"/><stop offset="1" stop-color="#0a8ff0"/></linearGradient>
<linearGradient id="gfold" x1="0" y1="0" x2="0" y2="1"><stop offset="0" stop-color="#ffe27a"/><stop offset="1" stop-color="#f5b90f"/></linearGradient>
<linearGradient id="gedge" x1="0" y1="0" x2="1" y2="1"><stop offset="0" stop-color="#36c2b4"/><stop offset="0.5" stop-color="#1f8fe0"/><stop offset="1" stop-color="#0c59b0"/></linearGradient>
<linearGradient id="gteams" x1="0" y1="0" x2="1" y2="1"><stop offset="0" stop-color="#8d7ee8"/><stop offset="1" stop-color="#5b4fc4"/></linearGradient>
<linearGradient id="gatom" x1="0" y1="0" x2="0" y2="1"><stop offset="0" stop-color="#5cc98a"/><stop offset="1" stop-color="#2f9a62"/></linearGradient>
<linearGradient id="gfus" x1="0" y1="0" x2="1" y2="1"><stop offset="0" stop-color="#fbe6d2"/><stop offset="1" stop-color="#f1cba8"/></linearGradient>
</defs>
<!-- windows -->
<g fill="url(#gwin)"><rect x="597" y="1045" width="11" height="11" rx="1"/><rect x="609" y="1045" width="11" height="11" rx="1"/><rect x="597" y="1057" width="11" height="11" rx="1"/><rect x="609" y="1057" width="11" height="11" rx="1"/></g>
<!-- search -->
<circle cx="654.5" cy="1054.5" r="8" fill="#3a3a3a" stroke="#e8e8e8" stroke-width="2"/>
<path d="M648.5 1060.5 L643.5 1065.5" stroke="#e8e8e8" stroke-width="2.4" stroke-linecap="round"/>
<!-- task view -->
<rect x="685" y="1051" width="18" height="16" rx="1.5" fill="#6a6a6a"/>
<rect x="691" y="1045" width="18" height="16" rx="1.5" fill="#f0f0f0"/>
<rect x="691" y="1051" width="12" height="10" fill="#9a9a9a"/>
<!-- widgets -->
<rect x="729" y="1045" width="24" height="22" rx="1.5" fill="#1560c0"/>
<rect x="731" y="1047" width="9" height="18" rx="1" fill="#f4f4f4"/>
<rect x="742" y="1047" width="9" height="10" fill="#5ccaff"/>
<rect x="742" y="1058" width="9" height="3.5" fill="#22a8f8"/><rect x="742" y="1062" width="9" height="3" fill="#0c8ae8"/>
<!-- teams -->
<circle cx="785" cy="1055.5" r="11.5" fill="url(#gteams)"/>
<path d="M775 1068 L778 1061 L783 1064Z" fill="#6a5cd0"/>
<rect x="778" y="1050" width="10" height="10" rx="1.5" fill="#fff"/>
<path d="M789 1053.5 L792.5 1051 V1059 L789 1056.5Z" fill="#fff"/>
<!-- explorer -->
<path d="M817 1046 H825 L827 1048 H841 V1066 H817Z" fill="#e8a800"/>
<rect x="817" y="1049.5" width="24.5" height="17" fill="url(#gfold)"/>
<path d="M822.5 1066 V1061 C822.5 1060 823.5 1059 824.5 1059 H834 C835 1059 836 1060 836 1061 V1066Z" fill="#1a7fd8"/>
<rect x="826.5" y="1072" width="6" height="3" rx="1.5" fill="#9a9a9a"/>
<!-- whatsapp -->
<circle cx="873" cy="1056" r="10" fill="#fff"/>
<path d="M862.5 1067 L864.5 1060.5 L869 1064.5Z" fill="#fff"/>
<circle cx="873" cy="1056" r="8.3" fill="#2cc04d"/>
<path d="M869.5 1051.5 C868.5 1052.5 868.5 1054.5 870.5 1057 C872.5 1059.5 875 1060.8 876.5 1060.3 L877.8 1059 L875.8 1057.5 L874.5 1058.3 C873.5 1057.8 872 1056.3 871.5 1055.2 L872.3 1054 L871 1051.8Z" fill="#fff"/>
<circle cx="882" cy="1047" r="8" fill="#e81123"/>
<path d="M880.3 1044.3 L882.8 1042.5 V1051.5" fill="none" stroke="#fff" stroke-width="1.5"/>
<rect x="870" y="1072" width="6" height="3" rx="1.5" fill="#9a9a9a"/>
<!-- edge -->
<circle cx="917" cy="1056.5" r="12" fill="url(#gedge)"/>
<path d="M909 1058 C909 1052 914 1049.5 918.5 1050.5 C923 1051.5 925 1055 924.5 1058 H913.5 C913.5 1062 917 1064.5 922 1063 C919 1068 909 1066 909 1058Z" fill="#1c1c1c" opacity="0.55"/>
<!-- cmd -->
<rect x="949" y="1046.5" width="22.5" height="18.5" fill="#000" stroke="#bdbdbd" stroke-width="1"/>
<rect x="949" y="1046.5" width="22.5" height="2" fill="#9a9a9a"/>
<path d="M951.5 1052 h3 M951.5 1053.5 h2 M955.5 1052 l1.5 3 M962 1055 h5" stroke="#fff" stroke-width="0.9"/>
<!-- xampp -->
<rect x="993" y="1044" width="24" height="24" rx="2.5" fill="#f57e20"/>
<path d="M998.5 1049.5 C1001 1047.5 1003.5 1049 1005 1051 C1006.5 1049 1009 1047.5 1011.5 1049.5 C1013.5 1051.5 1012 1054 1010 1056 C1012 1058 1013.5 1060.5 1011.5 1062.5 C1009 1064.5 1006.5 1063 1005 1061 C1003.5 1063 1001 1064.5 998.5 1062.5 C996.5 1060.5 998 1058 1000 1056 C998 1054 996.5 1051.5 998.5 1049.5Z" fill="none" stroke="#fff" stroke-width="2.6"/>
<!-- chrome -->
<circle cx="1049" cy="1056" r="11.3" fill="#db3a2e"/>
<path d="M1049 1056 L1039.2 1061.6 A11.3 11.3 0 0 0 1052 1066.9Z" fill="#1f9d55"/>
<path d="M1049 1056 L1052 1066.9 A11.3 11.3 0 0 0 1060.3 1056 L1049 1056Z" fill="#fcc934"/>
<path d="M1049 1056 L1039.2 1061.6 A11.3 11.3 0 0 1 1039.5 1050Z" fill="#1f9d55"/>
<circle cx="1049" cy="1056" r="5" fill="#fff"/>
<circle cx="1049" cy="1056" r="3.8" fill="#3b7cf0"/>
<rect x="1046" y="1072" width="6" height="3" rx="1.5" fill="#9a9a9a"/>
<!-- atom -->
<circle cx="1093" cy="1056" r="12" fill="url(#gatom)"/>
<g fill="none" stroke="#e8f8ee" stroke-width="0.9"><ellipse cx="1093" cy="1056" rx="8" ry="3"/><ellipse cx="1093" cy="1056" rx="8" ry="3" transform="rotate(60 1093 1056)"/><ellipse cx="1093" cy="1056" rx="8" ry="3" transform="rotate(-60 1093 1056)"/></g>
<circle cx="1093" cy="1056" r="1.3" fill="#e8f8ee"/>
<!-- cube -->
<path d="M1126 1050 L1137 1044 L1148 1050 V1062 L1137 1068 L1126 1062Z" fill="#2f6fe0"/>
<path d="M1131 1049 L1137 1046 L1143 1049 V1056 L1137 1059 L1131 1056Z" fill="#f5a040"/>
<path d="M1126 1050 L1137 1056 L1148 1050 M1137 1056 V1068 M1131.5 1053 V1065 M1142.5 1053 V1065 M1126 1056 L1137 1062 L1148 1056" fill="none" stroke="#1a4aa8" stroke-width="0.7"/>
<!-- slack -->
<circle cx="1181" cy="1055.5" r="11.3" fill="#f4f4f4"/>
<g stroke-linecap="round" stroke-width="3">
<path d="M1174.3 1053.3 h5" stroke="#36c5f0"/><path d="M1179.6 1049.2 v0.1" stroke="#36c5f0"/>
<path d="M1183.6 1047.5 v5" stroke="#2eb67d"/><path d="M1187.4 1052.6 h0.1" stroke="#2eb67d"/>
<path d="M1182.8 1058 h5.2" stroke="#ecb22e"/><path d="M1182.9 1062 v0.1" stroke="#ecb22e"/>
<path d="M1178.4 1058.3 v5" stroke="#e01e5a"/><path d="M1174.6 1057.8 h0.1" stroke="#e01e5a"/>
</g>
<!-- inkscape -->
<defs><linearGradient id="gink" x1="0" y1="0" x2="1" y2="1"><stop offset="0" stop-color="#ffffff"/><stop offset="0.5" stop-color="#9aa8b8"/><stop offset="1" stop-color="#1e4e8c"/></linearGradient></defs>
<path d="M1225 1045 L1236 1056 L1230 1057.5 L1232 1061 L1227.5 1060 L1224.5 1066.5 L1221 1059.5 L1214 1056.5Z" fill="url(#gink)"/>
<path d="M1219 1054.5 C1222 1053 1224 1055.5 1226.5 1055 C1229 1054.5 1231 1054 1233 1055 L1230 1057.5 L1232 1061 L1227.5 1060 L1224.5 1066.5 L1221 1059.5 L1214 1056.5Z" fill="#111"/>
<circle cx="1225.5" cy="1058.5" r="2.2" fill="#2a5aa0"/>
<!-- fusion -->
<g transform="translate(1257 1044) scale(1.53) translate(-2.3 -3)">
<rect x="2.3" y="3" width="15.7" height="15.6" fill="#fbe4ce"/>
<rect x="2.3" y="13" width="15.7" height="5.6" fill="#fdf0e4"/>
<path d="M7 5.2 C7 4.7 7.4 4.4 7.9 4.4 H13.4 C14 4.4 14.2 5 14 5.6 L13.8 6.8 H10.1 V8.9 H13.2 L12.8 10.9 H10.1 V15 C10.1 15.4 9.8 15.6 9.4 15.6 H7.6 C7.2 15.6 7 15.3 7 15Z" fill="url(#gF)"/>
<rect x="11" y="16" width="4.3" height="1.8" fill="#f2b47a"/>
</g>
<!-- settings -->
<g transform="translate(1313 1056)">
<g fill="#8a96a6">
<circle r="9"/>
<rect x="-3" y="-12" width="6" height="5" rx="1"/><rect x="-3" y="7" width="6" height="5" rx="1"/>
<g transform="rotate(60)"><rect x="-3" y="-12" width="6" height="5" rx="1"/><rect x="-3" y="7" width="6" height="5" rx="1"/></g>
<g transform="rotate(-60)"><rect x="-3" y="-12" width="6" height="5" rx="1"/><rect x="-3" y="7" width="6" height="5" rx="1"/></g>
</g>
<circle r="5.2" fill="#fff"/><circle r="4" fill="#1a6fd0"/>
</g>
<rect x="1310" y="1072" width="6" height="3" rx="1.5" fill="#9a9a9a"/>
<!-- tray -->
<path d="M1640 1059 L1646 1052.5 L1652 1059" fill="none" stroke="#f0f0f0" stroke-width="1.2"/>
<path d="M1671.5 1057 A6.5 6.5 0 0 1 1683 1050.5 M1681 1048 L1683.5 1050.5 L1680.5 1052" fill="none" stroke="#f0f0f0" stroke-width="1.1"/>
<path d="M1684 1058 A6.5 6.5 0 0 1 1673 1062 M1675.5 1064 L1672.8 1062 L1675.5 1060" fill="none" stroke="#f0f0f0" stroke-width="1.1"/>
<circle cx="1682" cy="1060" r="3.6" fill="#f7a500"/>
<g fill="none" stroke="#f0f0f0" stroke-width="1.2">
<path d="M1746 1053.5 A11 11 0 0 1 1762 1053.5"/><path d="M1748.5 1056 A7.5 7.5 0 0 1 1759.5 1056"/><path d="M1751 1058.5 A4 4 0 0 1 1757 1058.5"/>
<path d="M1771 1053 H1774 L1778 1049.5 V1062.5 L1774 1059 H1771Z"/>
<path d="M1780.5 1053 A3.5 3.5 0 0 1 1780.5 1059 M1782.5 1051 A6.5 6.5 0 0 1 1782.5 1061"/>
<rect x="1796.5" y="1051.5" width="12" height="8.5" rx="1"/>
</g>
<circle cx="1754" cy="1060.5" r="1.1" fill="#f0f0f0"/>
<path d="M1784.5 1049.5 A9 9 0 0 1 1784.5 1062.5" fill="none" stroke="#888" stroke-width="1"/>
<rect x="1798" y="1053" width="7" height="5.5" fill="#f0f0f0"/>
<rect x="1808.5" y="1054" width="1.5" height="3.5" fill="#f0f0f0"/>
<path d="M1794.5 1049 v3 M1797 1049 v3 M1793.5 1052 h5" stroke="#f0f0f0" stroke-width="1"/>
</svg>

<div class="t" id="title" style="left:23.3px;top:6.22px;font-size:12.5px;color:#666;transform:scaleX(0.9379);transform-origin:0 0;z-index:20;">Autodesk Fusion 360 (Personal - Not for Commercial Use)</div>
<div class="t" id="doct" style="left:894.4px;top:35.96px;font-size:12.8px;color:#333;letter-spacing:-0.222px;z-index:20;">Untitled*</div>
<div class="t" id="cnt" style="left:1698.8px;top:33.18px;font-size:11.6px;color:#2e2e2e;transform:scaleX(0.9306);transform-origin:0 0;z-index:20;">10 of 10</div>
<div class="t" id="jobs" style="left:1783.5px;top:33.18px;font-size:11.6px;color:#2e2e2e;z-index:20;">1</div>
<div class="t" id="au" style="left:1885px;top:33.18px;font-size:11.6px;color:#333;transform:scaleX(0.9001);transform-origin:0 0;z-index:20;">AU</div>
<div class="t" id="design" style="left:42px;top:91.26px;font-size:11.5px;color:#333;font-weight:bold;transform:scaleX(0.8618);transform-origin:0 0;z-index:20;">DESIGN</div>
<div class="t" id="tsolid" style="left:150px;top:60.52px;font-size:11.2px;color:#3c3c3c;transform:scaleX(0.8845);transform-origin:0 0;z-index:20;">SOLID</div>
<div class="t" id="tsurf" style="left:228px;top:60.52px;font-size:11.2px;color:#3c3c3c;transform:scaleX(0.8800);transform-origin:0 0;z-index:20;">SURFACE</div>
<div class="t" id="tmesh" style="left:321px;top:60.52px;font-size:11.2px;color:#3c3c3c;transform:scaleX(0.8352);transform-origin:0 0;z-index:20;">MESH</div>
<div class="t" id="tsheet" style="left:394px;top:60.52px;font-size:11.2px;color:#3c3c3c;transform:scaleX(0.8737);transform-origin:0 0;z-index:20;">SHEET METAL</div>
<div class="t" id="tplast" style="left:507px;top:60.52px;font-size:11.2px;color:#3c3c3c;transform:scaleX(0.8941);transform-origin:0 0;z-index:20;">PLASTIC</div>
<div class="t" id="tutil" style="left:595px;top:60.52px;font-size:11.2px;color:#3c3c3c;transform:scaleX(0.8369);transform-origin:0 0;z-index:20;">UTILITIES</div>
<div class="t" id="tsketch" style="left:683.8px;top:60.52px;font-size:11.2px;color:#1a8fd0;transform:scaleX(0.9077);transform-origin:0 0;z-index:20;">SKETCH</div>
<div class="t" id="gcreate" style="left:235.5px;top:122.26px;font-size:11.5px;color:#fff;transform:scaleX(0.8298);transform-origin:0 0;z-index:20;">CREATE</div>
<div class="t" id="gmod" style="left:439.7px;top:122.26px;font-size:11.5px;color:#3c3c3c;transform:scaleX(0.8271);transform-origin:0 0;z-index:20;">MODIFY</div>
<div class="t" id="gcons" style="left:755.6px;top:122.26px;font-size:11.5px;color:#3c3c3c;transform:scaleX(0.8614);transform-origin:0 0;z-index:20;">CONSTRAINTS</div>
<div class="t" id="gins" style="left:1075.4px;top:122.26px;font-size:11.5px;color:#3c3c3c;transform:scaleX(0.8025);transform-origin:0 0;z-index:20;">INSPECT</div>
<div class="t" id="ginsert" style="left:1154px;top:122.26px;font-size:11.5px;color:#3c3c3c;transform:scaleX(0.8220);transform-origin:0 0;z-index:20;">INSERT</div>
<div class="t" id="gsel" style="left:1223px;top:122.26px;font-size:11.5px;color:#3c3c3c;transform:scaleX(0.8425);transform-origin:0 0;z-index:20;">SELECT</div>
<div class="t" id="gfin" style="left:1297px;top:122.26px;font-size:11.5px;color:#3c3c3c;transform:scaleX(0.8407);transform-origin:0 0;z-index:20;">FINISH SKETCH</div>
<div class="t" id="ro" style="left:778px;top:148.23px;font-size:11.3px;color:#333;font-weight:bold;letter-spacing:-0.274px;z-index:20;">Read-Only:</div>
<div class="t" id="dl" style="left:858px;top:148.43px;font-size:11.3px;color:#333;transform:scaleX(0.9448);transform-origin:0 0;z-index:20;">Document limit has been reached</div>
<div class="t" id="med" style="left:1047px;top:148.43px;font-size:11.3px;color:#1b7fc4;transform:scaleX(0.9221);transform-origin:0 0;z-index:20;">My Editable Documents</div>
<div class="t" id="brw" style="left:29px;top:148.49px;font-size:11px;color:#555;transform:scaleX(0.9148);transform-origin:0 0;z-index:20;">BROWSER</div>
<div class="t" id="b1" style="left:98px;top:175.86px;font-size:11.5px;color:#fff;font-weight:bold;z-index:5;">(Unsaved)</div>
<div class="t" id="b2" style="left:91.2px;top:199.96px;font-size:11.5px;color:#333;transform:scaleX(0.9200);transform-origin:0 0;z-index:5;">Document Settings</div>
<div class="t" id="b3" style="left:91.2px;top:223.96px;font-size:11.5px;color:#333;transform:scaleX(0.9200);transform-origin:0 0;z-index:5;">Named Views</div>
<div class="t" id="b4" style="left:116px;top:247.96px;font-size:11.5px;color:#333;transform:scaleX(0.9200);transform-origin:0 0;z-index:5;">Origin</div>
<div class="t" id="b5" style="left:116px;top:271.96px;font-size:11.5px;color:#333;transform:scaleX(0.9200);transform-origin:0 0;z-index:5;">Bodies</div>
<div class="t" id="b8" style="left:116px;top:343.96px;font-size:11.5px;color:#333;transform:scaleX(0.9200);transform-origin:0 0;z-index:5;">Sketches</div>
<div class="t" id="cmt" style="left:29.2px;top:959.89px;font-size:11px;color:#555;transform:scaleX(0.8820);transform-origin:0 0;z-index:20;">COMMENTS</div>
<div class="t" id="sp" style="left:1691.4px;top:267.69px;font-size:11px;color:#444;transform:scaleX(0.8907);transform-origin:0 0;z-index:20;">SKETCH PALETTE</div>
<div class="t" id="opt" style="left:1684px;top:295.96px;font-size:11.5px;color:#333;font-weight:bold;letter-spacing:-0.176px;z-index:20;">Options</div>
<div class="t" id="p1" style="left:1679px;top:326.43px;font-size:11.3px;color:#333;letter-spacing:-0.303px;z-index:20;">Linetype</div>
<div class="t" id="p2" style="left:1679px;top:356.43px;font-size:11.3px;color:#333;letter-spacing:-0.265px;z-index:20;">Look At</div>
<div class="t" id="p3" style="left:1679px;top:386.43px;font-size:11.3px;color:#333;transform:scaleX(0.9470);transform-origin:0 0;z-index:20;">Sketch Grid</div>
<div class="t" id="p4" style="left:1679px;top:416.43px;font-size:11.3px;color:#333;transform:scaleX(0.9397);transform-origin:0 0;z-index:20;">Snap</div>
<div class="t" id="p5" style="left:1679px;top:446.43px;font-size:11.3px;color:#333;transform:scaleX(0.9429);transform-origin:0 0;z-index:20;">Slice</div>
<div class="t" id="p6" style="left:1679px;top:476.43px;font-size:11.3px;color:#333;letter-spacing:-0.157px;z-index:20;">Show Profile</div>
<div class="t" id="p7" style="left:1679px;top:506.43px;font-size:11.3px;color:#333;letter-spacing:-0.230px;z-index:20;">Show Points</div>
<div class="t" id="p8" style="left:1679px;top:536.43px;font-size:11.3px;color:#333;letter-spacing:-0.273px;z-index:20;">Show Dimensions</div>
<div class="t" id="p9" style="left:1679px;top:566.43px;font-size:11.3px;color:#333;letter-spacing:-0.130px;z-index:20;">Show Constraints</div>
<div class="t" id="p10" style="left:1679px;top:596.43px;font-size:11.3px;color:#333;letter-spacing:-0.277px;z-index:20;">Show Projected Geometries</div>
<div class="t" id="p11" style="left:1679px;top:626.43px;font-size:11.3px;color:#333;transform:scaleX(0.9266);transform-origin:0 0;z-index:20;">3D Sketch</div>
<div class="t" id="fsb" style="left:1826px;top:661.02px;font-size:12.5px;color:#555;letter-spacing:-0.144px;z-index:20;">Finish Sketch</div>
<div class="t" id="top" style="left:1846px;top:194.15px;font-size:14px;color:#8d9096;font-weight:bold;transform:scaleX(0.7571);transform-origin:0 0;z-index:20;">TOP</div>
<div class="t" id="vy" style="left:1831.5px;top:160.64px;font-size:12px;color:#66dd66;font-weight:bold;z-index:20;">Y</div>
<div class="t" id="vx" style="left:1887px;top:217.64px;font-size:12px;color:#f06262;font-weight:bold;z-index:20;">X</div>
<div class="t" id="vz" style="left:1823px;top:224.54px;font-size:12px;color:#6a70f5;font-weight:bold;z-index:20;">Z</div>
<div class="t" id="m1" style="left:153.9px;top:144.26px;font-size:11.5px;color:#333;transform:scaleX(0.9011);transform-origin:0 0;z-index:20;">Line</div>
<div class="t" id="m1k" style="left:250.5px;top:144.26px;font-size:11.5px;color:#333;z-index:20;">L</div>
<div class="t" id="m2" style="left:153.9px;top:166.26px;font-size:11.5px;color:#333;transform:scaleX(0.9132);transform-origin:0 0;z-index:20;">Rectangle</div>
<div class="t" id="m3" style="left:153.9px;top:188.26px;font-size:11.5px;color:#333;transform:scaleX(0.8880);transform-origin:0 0;z-index:20;">Circle</div>
<div class="t" id="m4" style="left:153.9px;top:210.26px;font-size:11.5px;color:#333;letter-spacing:0.275px;z-index:20;">Arc</div>
<div class="t" id="m5" style="left:153.9px;top:232.26px;font-size:11.5px;color:#333;transform:scaleX(0.8950);transform-origin:0 0;z-index:20;">Polygon</div>
<div class="t" id="m6" style="left:153.9px;top:254.26px;font-size:11.5px;color:#333;transform:scaleX(0.8675);transform-origin:0 0;z-index:20;">Ellipse</div>
<div class="t" id="m7" style="left:153.9px;top:276.26px;font-size:11.5px;color:#333;transform:scaleX(0.8977);transform-origin:0 0;z-index:20;">Slot</div>
<div class="t" id="m8" style="left:153.9px;top:298.26px;font-size:11.5px;color:#333;transform:scaleX(0.8852);transform-origin:0 0;z-index:20;">Spline</div>
<div class="t" id="m9" style="left:153.9px;top:320.26px;font-size:11.5px;color:#333;transform:scaleX(0.9213);transform-origin:0 0;z-index:20;">Conic Curve</div>
<div class="t" id="m10" style="left:153.9px;top:342.26px;font-size:11.5px;color:#333;transform:scaleX(0.8696);transform-origin:0 0;z-index:20;">Point</div>
<div class="t" id="m11" style="left:153.9px;top:364.26px;font-size:11.5px;color:#333;transform:scaleX(0.9339);transform-origin:0 0;z-index:20;">Text</div>
<div class="t" id="m12" style="left:153.9px;top:387.66px;font-size:11.5px;color:#333;transform:scaleX(0.9157);transform-origin:0 0;z-index:20;">Mirror</div>
<div class="t" id="m13" style="left:153.9px;top:409.06px;font-size:11.5px;color:#333;transform:scaleX(0.9112);transform-origin:0 0;z-index:20;">Circular Pattern</div>
<div class="t" id="m14" style="left:153.9px;top:431.06px;font-size:11.5px;color:#333;transform:scaleX(0.9208);transform-origin:0 0;z-index:20;">Rectangular Pattern</div>
<div class="t" id="m15" style="left:153.9px;top:454.26px;font-size:11.5px;color:#333;transform:scaleX(0.9106);transform-origin:0 0;z-index:20;">Project / Include</div>
<div class="t" id="m16" style="left:153.9px;top:477.06px;font-size:11.5px;color:#333;transform:scaleX(0.9041);transform-origin:0 0;z-index:20;">Sketch Dimension</div>
<div class="t" id="m16k" style="left:250px;top:477.06px;font-size:11.5px;color:#333;z-index:20;">D</div>
<div class="t" id="s1" style="left:305.5px;top:231.56px;font-size:11.5px;color:#333;transform:scaleX(0.9218);transform-origin:0 0;z-index:20;">Circumscribed Polygon</div>
<div class="t" id="s2" style="left:305.5px;top:253.56px;font-size:11.5px;color:#333;transform:scaleX(0.9188);transform-origin:0 0;z-index:20;">Inscribed Polygon</div>
<div class="t" id="s3" style="left:305.5px;top:275.56px;font-size:11.5px;color:#333;transform:scaleX(0.8894);transform-origin:0 0;z-index:20;">Edge Polygon</div>
<div class="t" id="tt1" style="left:463px;top:257.26px;font-size:11.5px;color:#fff;font-weight:bold;letter-spacing:0.168px;z-index:20;">Creates a polygon using the center point and the</div>
<div class="t" id="tt2" style="left:463px;top:270.26px;font-size:11.5px;color:#fff;font-weight:bold;letter-spacing:0.127px;z-index:20;">midpoint of one edge.</div>
<div class="t" id="tt3" style="left:463px;top:295.66px;font-size:11.5px;color:#fff;font-weight:bold;letter-spacing:0.154px;z-index:20;">Select the center point of the polygon. Specify a</div>
<div class="t" id="tt4" style="left:463px;top:308.66px;font-size:11.5px;color:#fff;font-weight:bold;letter-spacing:0.167px;z-index:20;">value for the number of sides. Select the midpoint of</div>
<div class="t" id="tt5" style="left:463px;top:321.66px;font-size:11.5px;color:#fff;font-weight:bold;letter-spacing:0.147px;z-index:20;">an edge or specify a distance and select a point.</div>
<div class="t" id="tt6" style="left:463px;top:356.26px;font-size:11.5px;color:#fff;font-weight:bold;letter-spacing:0.264px;z-index:20;">Press Ctrl+/ for more help.</div>
<div class="t" id="eng" style="left:1704.7px;top:1044.26px;font-size:11.5px;color:#fff;transform:scaleX(0.9149);transform-origin:0 0;z-index:20;">ENG</div>
<div class="t" id="us" style="left:1708.7px;top:1059.56px;font-size:11.5px;color:#fff;transform:scaleX(0.9134);transform-origin:0 0;z-index:20;">US</div>
<div class="t" id="time" style="left:1833.7px;top:1043.26px;font-size:11.5px;color:#fff;letter-spacing:-0.038px;z-index:20;">8:08 PM</div>
<div class="t" id="date" style="left:1825.3px;top:1059.26px;font-size:11.5px;color:#fff;letter-spacing:0.086px;z-index:20;">2/11/2022</div>
<div class="t" id="seven" style="left:1889px;top:1051.53px;font-size:10px;color:#1c1c1c;z-index:20;">7</div>
<!-- MENU -->
<div class="a" style="left:129px;top:135px;width:159px;height:361px;background:#fff;border:1px solid #8c8c8c;border-radius:3px 3px 4px 4px;z-index:10"></div>
<div class="a" style="left:134px;top:226px;width:147px;height:22px;background:#d8d8d8;z-index:11"></div>
<div class="a" style="left:134px;top:380px;width:149px;height:1px;background:#6a6a6a;z-index:11"></div>
<div class="a" style="left:134px;top:447px;width:149px;height:1px;background:#6a6a6a;z-index:11"></div>
<div class="a" style="left:134px;top:470px;width:149px;height:1px;background:#6a6a6a;z-index:11"></div>
<!-- SUBMENU -->
<div class="a" style="left:280px;top:223px;width:165px;height:72px;background:#fff;border:1px solid #8c8c8c;border-radius:4px;z-index:12"></div>
<div class="a" style="left:285px;top:226px;width:155px;height:22px;background:#d8d8d8;z-index:13"></div>
<!-- TOOLTIP -->
<div class="a" style="left:449px;top:230px;width:328px;height:141px;background:#515151;border-radius:10px;z-index:12"></div>
<svg width="1920" height="1080" viewBox="0 0 1920 1080" style="z-index:15">
<g fill="none" stroke="#555" stroke-width="1.1">
<!-- line -->
<path d="M138 152 h5"/>
<path d="M147 144.3 a4 3.7 0 0 1 0 7.4"/>
<!-- ellipse -->
<path d="M139.5 252.8 C133 254 133 261.5 140 262.5 C144 263 147.5 262 148.5 260.2"/>
<path d="M144.5 253 C146 253.5 147.5 254.5 148 255.3"/>
<!-- conic -->
<path d="M136 328.5 C137.5 322 140 319.3 142.3 319.3 C144.5 319.3 147 322 148.5 328.5"/>
<!-- point -->
<path d="M135 345.5 h5 M145 345.5 h5 M142.5 338 v4.5 M142.5 348.5 v5"/>
<!-- mirror -->
<path d="M135.8 397.5 L142 385.5 V397.5 Z"/>
<!-- circular pattern gray -->
<circle cx="138.1" cy="409.7" r="1.5"/>
<rect x="135.5" y="428.5" width="3" height="3"/>
<path d="M140 430 h3 M137 433 v2"/>
<path d="M135.5 474 v15 M150.5 474 v15"/>
</g>
<rect x="141" y="344" width="3" height="3" fill="#555"/>
<g fill="#1d8de0">
<rect x="135" y="151" width="2.2" height="2.2"/><rect x="144" y="151" width="2.2" height="2.2"/><rect x="144" y="143" width="2.2" height="2.2"/>
<rect x="141" y="252" width="2.2" height="2.2"/><rect x="141" y="257" width="2.2" height="2.2"/><rect x="148" y="257" width="2.2" height="2.2"/>
<rect x="135" y="329" width="2.2" height="2.2"/><rect x="148.3" y="329" width="2.2" height="2.2"/><rect x="141.3" y="316" width="2.2" height="2.2"/>
</g>
<g fill="none" stroke="#1d8de0" stroke-width="1.1">
<path d="M143.2 385.5 V397.5 H149.5 Z"/>
<circle cx="142.7" cy="406.4" r="1.5"/><circle cx="147.8" cy="409.7" r="1.5"/><circle cx="138.1" cy="415.6" r="1.5"/><circle cx="147.8" cy="415.6" r="1.5"/><circle cx="142.7" cy="418.7" r="1.5"/>
<rect x="146" y="428.5" width="3" height="3"/><rect x="135.5" y="436.5" width="3" height="3"/><rect x="146" y="436.5" width="3" height="3"/>
<path d="M140 438 h3"/>
<path d="M137 478.2 h12"/>
<path d="M139 476.5 l-2 1.7 l2 1.7 M147 476.5 l2 1.7 l-2 1.7"/>
</g>
<!-- text A -->
<path d="M135.8 375.5 L141 360.8 H145.2 L150.6 375.5 H147.2 L146.1 372.2 H140.2 L139.1 375.5 Z M141.1 369.4 H145.2 L143.15 363.2 Z" fill="#5e5e5e" fill-rule="evenodd"/>
<!-- submenu arrows -->
<g fill="#222">
<path d="M272 166 l6 5 l-6 5z"/>
<path d="M272 188 l6 5 l-6 5z"/>
<path d="M272 210 l6 5 l-6 5z"/>
<path d="M272 232 l6 5 l-6 5z"/>
<path d="M272 276 l6 5 l-6 5z"/>
<path d="M272 298 l6 5 l-6 5z"/>
<path d="M272 454 l6 5 l-6 5z"/>
</g>
<!-- submenu icons -->
<g fill="none" stroke="#555" stroke-width="1">
<path d="M294 228.3 L301.4 234.6 L299 243.5 H289.2 L286.4 234.6 Z"/>
<path d="M294 229.8 L300 234.9 L298 242.2 H290.2 L287.9 234.9 Z" stroke-width="0.7"/>
<circle cx="294" cy="237.2" r="5.3" stroke-width="0.9"/>
<circle cx="294.4" cy="257.5" r="7.4"/>
<circle cx="294.4" cy="257.5" r="6.2" stroke-width="0.7"/>
<path d="M294.4 251.5 L299.8 255.6 L297.8 262.5 H291 L289 255.6 Z" stroke-width="0.9"/>
<path d="M290 285.5 L287.3 278.6 L294 273 L300.7 278.6 L298 285.5"/>
<path d="M292.3 285.6 h3.4"/>
</g>
<g fill="#1d8de0">
<rect x="293" y="236.2" width="2.2" height="2.2"/><rect x="297.6" y="232" width="2.2" height="2.2"/>
<rect x="293.3" y="250.3" width="2.2" height="2.2"/><rect x="293.3" y="256.4" width="2.2" height="2.2"/>
<rect x="288.8" y="284.5" width="2.2" height="2.2"/><rect x="297.2" y="284.5" width="2.2" height="2.2"/>
</g>
<!-- dots -->
<g fill="#111"><circle cx="429" cy="232.6" r="1.2"/><circle cx="429" cy="237.2" r="1.2"/><circle cx="429" cy="241.8" r="1.2"/></g>
</svg>

</body></html>
